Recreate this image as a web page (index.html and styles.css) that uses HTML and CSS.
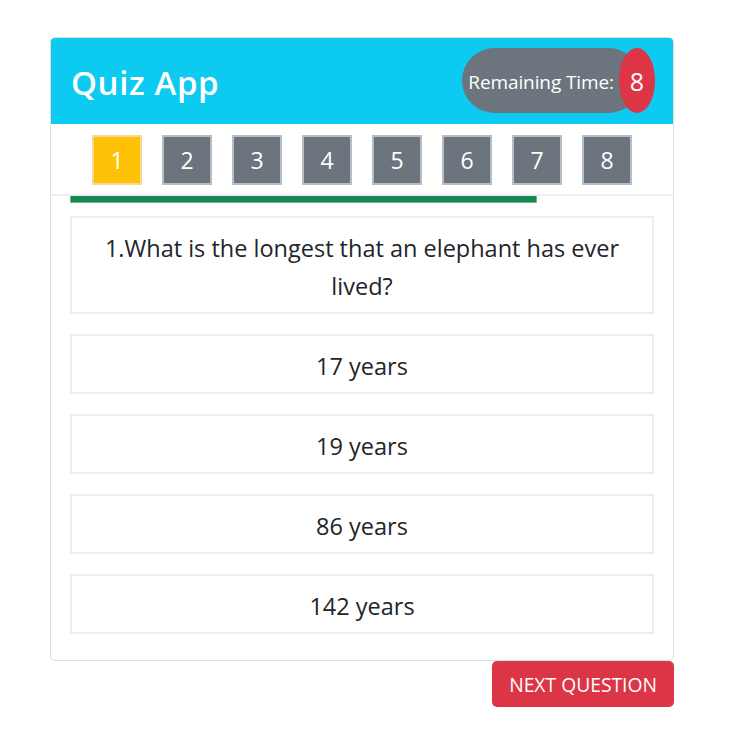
FILE: index.html
```html
<!DOCTYPE html>
<html>
<head>
<meta charset="utf-8">
<link rel="stylesheet" href="styles.css">
</head>
<body>
<div class="wrap">
  <div class="card">
    <div class="card-header">
      <h2 class="title">Quiz App</h2>
      <div class="timer">
        <span class="timer-label">Remaining Time:</span>
        <span class="timer-count">8</span>
      </div>
    </div>
    <div class="nav-row">
      <button class="num active">1</button>
      <button class="num">2</button>
      <button class="num">3</button>
      <button class="num">4</button>
      <button class="num">5</button>
      <button class="num">6</button>
      <button class="num">7</button>
      <button class="num">8</button>
    </div>
    <div class="card-body">
      <div class="progress"><div class="progress-bar" style="width:80%"></div></div>
      <div class="question">1.What is the longest that an elephant has ever lived?</div>
      <div class="option">17 years</div>
      <div class="option">19 years</div>
      <div class="option">86 years</div>
      <div class="option">142 years</div>
    </div>
  </div>
  <div class="actions">
    <button class="next">NEXT QUESTION</button>
  </div>
</div>
</body>
</html>
```
FILE: styles.css
```css
* { box-sizing: border-box; }
html, body { margin: 0; padding: 0; background: #fff; }
body {
  font-family: "Open Sans", "Noto Sans", sans-serif;
  color: #212529;
}
.wrap {
  width: 624px;
  margin: 37px 0 0 50px;
}
.card {
  border: 1px solid #dfe0e3;
  border-radius: 5px;
  overflow: hidden;
  background: #fff;
}
.card-header {
  background: #0dcaf0;
  height: 86px;
  display: flex;
  align-items: center;
  justify-content: space-between;
  padding: 0 18px 0 20px;
}
.title {
  margin: 0;
  color: #fff;
  font-size: 33px;
  font-weight: 600;
  letter-spacing: 0.6px;
  padding-top: 2px;
}
.timer {
  display: flex;
  align-items: center;
  height: 65px;
  margin-top: -2px;
}
.timer-label {
  background: #6c757d;
  color: #fff;
  height: 65px;
  display: flex;
  align-items: center;
  border-radius: 33px;
  padding: 3px 27px 0 6px;
  font-size: 19px;
  letter-spacing: -0.1px;
}
.timer-count {
  width: 36px;
  height: 65px;
  border-radius: 50%;
  background: #dc3545;
  color: #fff;
  display: flex;
  align-items: center;
  justify-content: center;
  padding-top: 2px;
  font-size: 25px;
  margin-left: -22px;
}
.nav-row {
  display: flex;
  justify-content: center;
  gap: 20px;
  padding: 11px 0 9px;
  border-bottom: 2px solid #eeeef2;
}
.num {
  width: 50px;
  height: 50px;
  border: 2px solid #b8bdc3;
  background: #6c757d;
  color: #fff;
  font-family: inherit;
  font-size: 23px;
  padding: 0;
  display: flex;
  align-items: center;
  justify-content: center;
}
.num.active {
  background: #ffc107;
  border-color: #f3d993;
}
.card-body {
  padding: 0 19px 26px;
  display: flex;
  flex-direction: column;
  gap: 20px;
}
.progress {
  height: 7px;
  margin-bottom: -7px;
}
.progress-bar {
  height: 7px;
  background: #198754;
  border: 1px solid #6fb394;
  border-top: none;
}
.question, .option {
  border: 2px solid #eeeef2;
  text-align: center;
  font-size: 23.5px;
  line-height: 38px;
  padding: 11px 10px 7px;
}
.actions {
  display: flex;
  justify-content: flex-end;
}
.next {
  background: #dc3545;
  color: #fff;
  border: none;
  border-radius: 5px;
  height: 46px;
  padding: 1px 17px 0;
  font-family: inherit;
  font-size: 19.3px;
}
```
